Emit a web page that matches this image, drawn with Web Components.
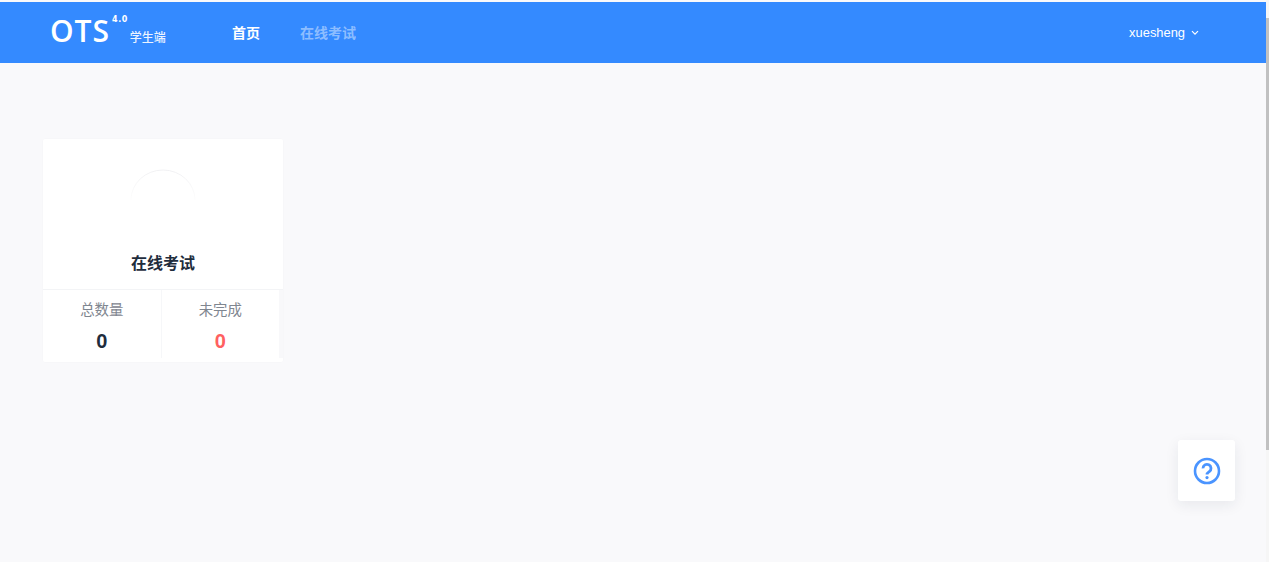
<!DOCTYPE html>
<html lang="zh">
<head>
<meta charset="utf-8">
<title>OTS</title>
<style>
  html, body { margin: 0; height: 100%; overflow: hidden; }
  body {
    background: #f9f9fb;
    font-family: "Liberation Sans", "Noto Sans CJK SC", sans-serif;
    color: #1f2d3d;
  }
</style>
</head>
<body>
<ots-app>
  <ots-header>
    <nav-link active>首页</nav-link>
    <nav-link>在线考试</nav-link>
  </ots-header>
  <ots-main>
    <stat-card title="在线考试" total="0" pending="0"></stat-card>
  </ots-main>
  <help-button></help-button>
</ots-app>

<script>
// Elemento raiz, guarda o layout e a barra de rolagem da direita
class OtsApp extends HTMLElement {
    constructor() {
        super();
        this.attachShadow({ mode: "open" }).innerHTML = `
            <style>
                :host { display: flex; height: 562px; }
                .page { flex: 1; min-width: 0; display: flex; flex-direction: column; position: relative; }
                .track { width: 3px; background: #f6f6f6; padding-top: 18px; box-sizing: border-box; }
                .thumb { height: 432px; background: #c1c1c1; }
            </style>
            <div class="page"><slot></slot></div>
            <div class="track"><div class="thumb"></div></div>
        `;
    }
}

class OtsHeader extends HTMLElement {
    constructor() {
        super();
        this.attachShadow({ mode: "open" }).innerHTML = `
            <style>
                :host {
                    display: flex; align-items: center; flex: none;
                    height: 61px; box-sizing: border-box;
                    margin-top: 2px;
                    background: #348aff; color: #fff;
                    padding: 0 67px 0 50px;
                }
                .logo { display: flex; width: 182px; height: 100%; }
                .ots { font: 600 30px/1 "Open Sans", sans-serif; margin-top: 14px; letter-spacing: 1px; }
                .ver { font: 700 8px/1 "DejaVu Sans", sans-serif; margin: 14px 0 0 2px; letter-spacing: .5px; }
                .sub { font-size: 12px; line-height: 1; font-weight: 500; margin: 30px 0 0 2px; opacity: .9; }
                nav { display: flex; gap: 40px; flex: 1; margin-top: -2px; }
                .user { font-size: 12.9px; display: flex; align-items: center; gap: 6px; }
                svg { display: block; }
            </style>
            <div class="logo">
                <span class="ots">OTS</span>
                <span class="ver">4.0</span>
                <span class="sub">学生端</span>
            </div>
            <nav><slot></slot></nav>
            <div class="user">xuesheng
                <svg width="8" height="6" viewBox="0 0 8 6" fill="none" stroke="#fff" stroke-width="1.2"><path d="M1 1.2 4 4.2 7 1.2"/></svg>
            </div>
        `;
    }
}

class NavLink extends HTMLElement {
    constructor() {
        super();
        this.attachShadow({ mode: "open" }).innerHTML = `
            <style>
                :host { display: block; font-size: 14px; font-weight: 700; color: rgba(255,255,255,.45); }
                :host([active]) { color: #fff; }
            </style>
            <slot></slot>
        `;
    }
}

class OtsMain extends HTMLElement {
    constructor() {
        super();
        this.attachShadow({ mode: "open" }).innerHTML = `
            <style>
                :host { display: block; flex: 1; padding: 76px 0 0 43px; }
            </style>
            <slot></slot>
        `;
    }
}

class StatCard extends HTMLElement {
    constructor() {
        super();
        const titulo = this.getAttribute("title");
        const total = this.getAttribute("total");
        const pending = this.getAttribute("pending");
        this.attachShadow({ mode: "open" }).innerHTML = `
            <style>
                :host {
                    display: block; width: 240px; height: 223px;
                    background: #fff; border-radius: 2px;
                    box-shadow: 0 0 2px rgba(0,0,0,.03);
                }
                .top { height: 151px; box-sizing: border-box; padding-top: 30px; text-align: center; border-bottom: 1px solid #f3f4f6; }
                .arc { display: block; margin: 0 auto; }
                h3 { margin: 53px 0 0; font-size: 16px; line-height: 20px; font-weight: 700; color: #1f2d3d; }
                .stats { display: flex; height: 68px; box-sizing: border-box; border-right: 4px solid #f8f8fa; }
                .stat { flex: 1; text-align: center; padding-top: 11px; }
                .stat + .stat { border-left: 1px solid #f6f7f9; }
                .label { font-size: 14.4px; line-height: 18px; color: #7f8690; }
                .num { font-size: 20px; font-weight: 700; line-height: 24px; margin-top: 10px; }
                .red { color: #ff6060; }
            </style>
            <div class="top">
                <svg class="arc" width="66" height="32" viewBox="0 0 66 32" fill="none">
                    <defs>
                        <linearGradient id="fade" x1="0" y1="0" x2="0" y2="1">
                            <stop offset="0" stop-color="#f1f1f3"/>
                            <stop offset="1" stop-color="#fdfdfd"/>
                        </linearGradient>
                    </defs>
                    <path d="M1 31A32 30 0 0 1 65 31" stroke="url(#fade)" stroke-width="1"/>
                </svg>
                <h3>${titulo}</h3>
            </div>
            <div class="stats">
                <div class="stat"><div class="label">总数量</div><div class="num">${total}</div></div>
                <div class="stat"><div class="label">未完成</div><div class="num red">${pending}</div></div>
            </div>
        `;
    }
}

class HelpButton extends HTMLElement {
    constructor() {
        super();
        this.attachShadow({ mode: "open" }).innerHTML = `
            <style>
                :host {
                    position: absolute; left: 1178px; top: 440px;
                    width: 57px; height: 61px; border-radius: 3px;
                    background: #fff; box-shadow: 0 4px 14px rgba(30,40,70,.08);
                    display: flex; align-items: center; justify-content: center;
                }
            </style>
            <svg width="28" height="28" viewBox="0 0 28 28" fill="none" stroke="#4a94ff" stroke-width="2.6">
                <circle cx="14" cy="14" r="12"/>
                <path d="M10 11.4a4 4 0 1 1 6.3 3.2c-1.4 1-2.3 1.6-2.3 3" stroke-width="2.8"/>
                <circle cx="14" cy="20.6" r="1.6" fill="#4a94ff" stroke="none"/>
            </svg>
        `;
    }
}

window.customElements.define("ots-app", OtsApp);
window.customElements.define("ots-header", OtsHeader);
window.customElements.define("nav-link", NavLink);
window.customElements.define("ots-main", OtsMain);
window.customElements.define("stat-card", StatCard);
window.customElements.define("help-button", HelpButton);
</script>
</body>
</html>
